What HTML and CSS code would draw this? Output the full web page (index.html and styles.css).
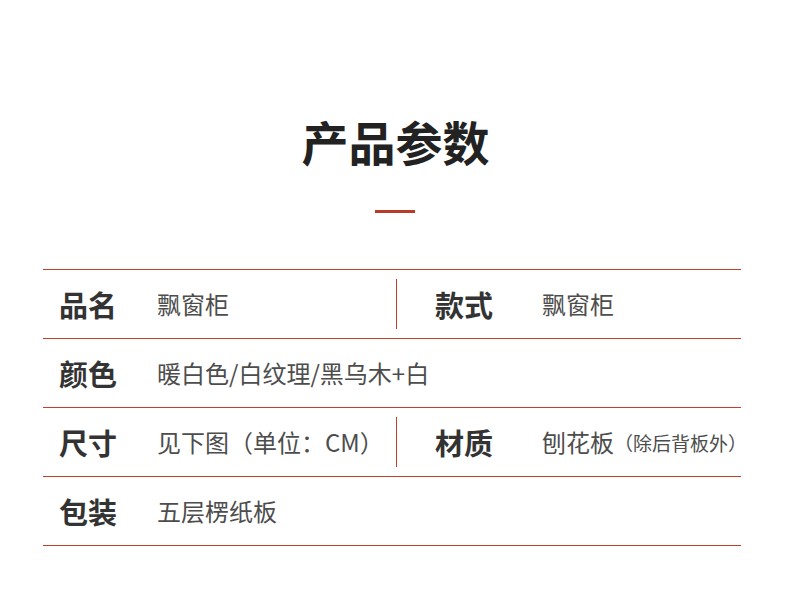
FILE: index.html
```html
<!DOCTYPE html>
<html lang="zh-CN">
<head>
<meta charset="utf-8">
<title>产品参数</title>
<link rel="stylesheet" href="styles.css">
</head>
<body>
<div class="page">
  <h1 class="title">产品参数</h1>
  <div class="bar"></div>
  <div class="table">
    <div class="row">
      <div class="cell left">
        <span class="label">品名</span>
        <span class="value">飘窗柜</span>
      </div>
      <div class="cell right">
        <span class="label">款式</span>
        <span class="value">飘窗柜</span>
      </div>
    </div>
    <div class="row">
      <div class="cell full">
        <span class="label">颜色</span>
        <span class="value">暖白色/白纹理/黑乌木+白</span>
      </div>
    </div>
    <div class="row">
      <div class="cell left">
        <span class="label">尺寸</span>
        <span class="value">见下图（单位：CM）</span>
      </div>
      <div class="cell right">
        <span class="label">材质</span>
        <span class="value">刨花板<small class="note">（除后背板外）</small></span>
      </div>
    </div>
    <div class="row">
      <div class="cell full">
        <span class="label">包装</span>
        <span class="value">五层楞纸板</span>
      </div>
    </div>
  </div>
</div>
</body>
</html>
```

FILE: styles.css
```css
* { box-sizing: border-box; }
html, body {
  margin: 0;
  padding: 0;
  background: #ffffff;
}
body {
  font-family: "Noto Sans CJK SC", "Noto Sans", sans-serif;
  color: #333333;
}
.page {
  width: 790px;
  padding: 117px 49px 0 43px;
  display: flex;
  flex-direction: column;
  align-items: stretch;
}
.title {
  margin: 0;
  padding-left: 7px;
  font-size: 47px;
  line-height: 48px;
  font-weight: 700;
  color: #222222;
  text-align: center;
}
.bar {
  align-self: center;
  width: 40px;
  height: 3px;
  background: #b83a27;
  margin: 45px 0 0 6px;
}
.table {
  margin-top: 56px;
  border-top: 1px solid #c2402a;
}
.row {
  display: flex;
  height: 69px;
  border-bottom: 1px solid #c2402a;
  align-items: stretch;
}
.cell {
  display: flex;
  align-items: center;
  min-width: 0;
}
.left {
  flex: 0 0 354px;
  width: 354px;
  padding-left: 16px;
  border-right: 1px solid #c2402a;
  margin: 9px 0;
}
.left .label { width: 98px; }
.right {
  flex: 1 1 0;
  padding-left: 38px;
}
.right .label { width: 107px; }
.full {
  flex: 1;
  padding-left: 16px;
}
.full .label { width: 98px; }
.label {
  flex: 0 0 auto;
  font-size: 29px;
  font-weight: 700;
  color: #333333;
  line-height: 1;
  white-space: nowrap;
}
.value {
  flex: 0 0 auto;
  font-size: 24px;
  font-weight: 400;
  color: #4d4d4d;
  line-height: 1;
  white-space: nowrap;
  display: flex;
  align-items: center;
}
.note {
  font-size: 19px;
  color: #4d4d4d;
}
```
